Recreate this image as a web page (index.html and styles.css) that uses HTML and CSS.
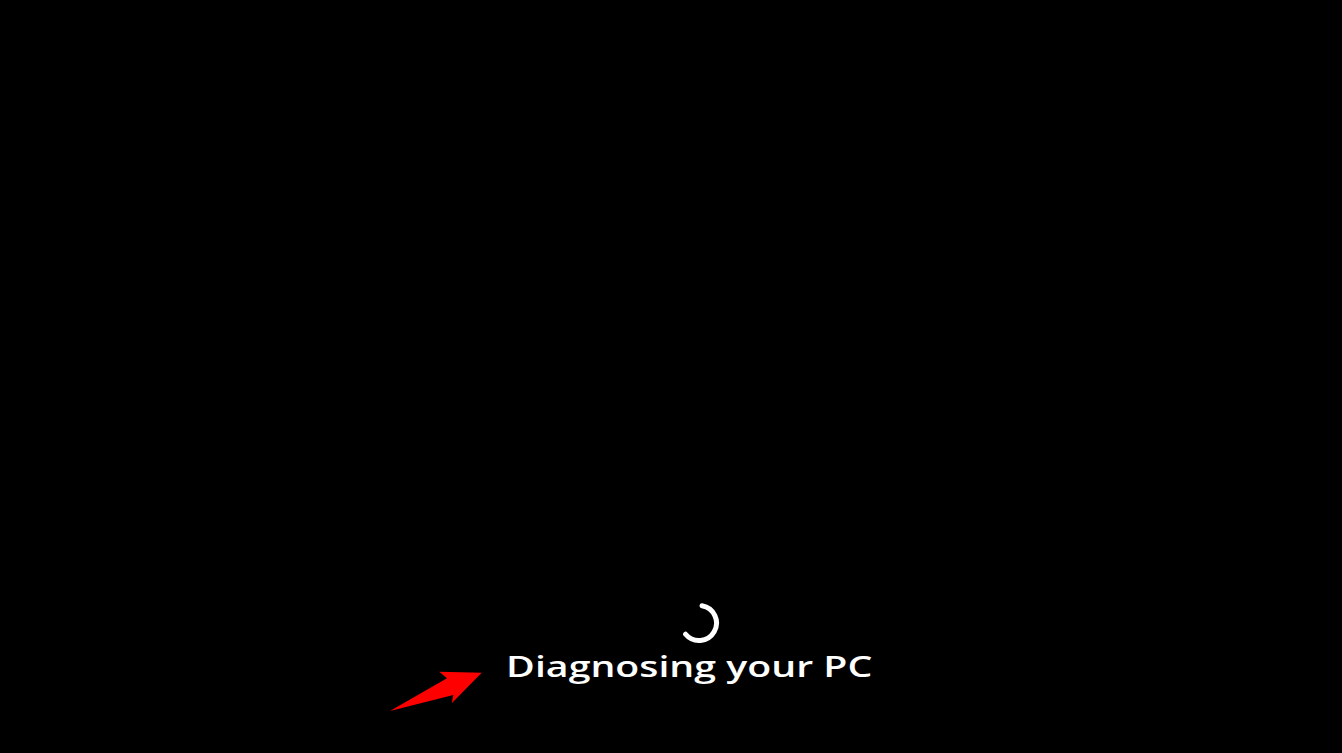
FILE: index.html
```html
<!DOCTYPE html>
<html lang="en">
<head>
<meta charset="utf-8">
<title>Diagnosing your PC</title>
<link rel="stylesheet" href="styles.css">
</head>
<body>
<main class="screen">
  <div class="status">
    <svg class="spinner" width="44" height="44" viewBox="0 0 44 44" aria-hidden="true">
      <path d="M25.04 4.77 A17.5 17.5 0 1 1 8.59 33.25" fill="none" stroke="#ffffff" stroke-width="5" stroke-linecap="round"/>
    </svg>
    <p class="message">Diagnosing your PC</p>
  </div>
  <svg class="pointer" width="105" height="52" viewBox="0 0 105 52" aria-hidden="true">
    <polygon points="5,46 62,13.3 54.3,6.7 96.7,7.7 66.7,38.3 68.3,30" fill="#ff0000"/>
  </svg>
</main>
</body>
</html>
```
FILE: styles.css
```css
* { box-sizing: border-box; }
html, body {
  margin: 0;
  padding: 0;
  background: #000;
}
.screen {
  position: relative;
  width: 1342px;
  height: 753px;
  background: #000;
  display: flex;
  flex-direction: column;
  justify-content: flex-start;
  align-items: center;
  padding-left: 36px;
  padding-top: 601px;
}
.status {
  display: flex;
  flex-direction: column;
  align-items: center;
}
.spinner {
  display: block;
  margin-left: 20px;
}
.message {
  margin: 0;
  margin-top: 1px;
  font-family: "Open Sans", "Noto Sans", sans-serif;
  font-weight: 600;
  font-size: 29px;
  line-height: 40px;
  color: #fff;
  white-space: nowrap;
  transform: scaleX(1.354);
  transform-origin: center;
}
.pointer {
  position: absolute;
  left: 385px;
  top: 665px;
}
```
